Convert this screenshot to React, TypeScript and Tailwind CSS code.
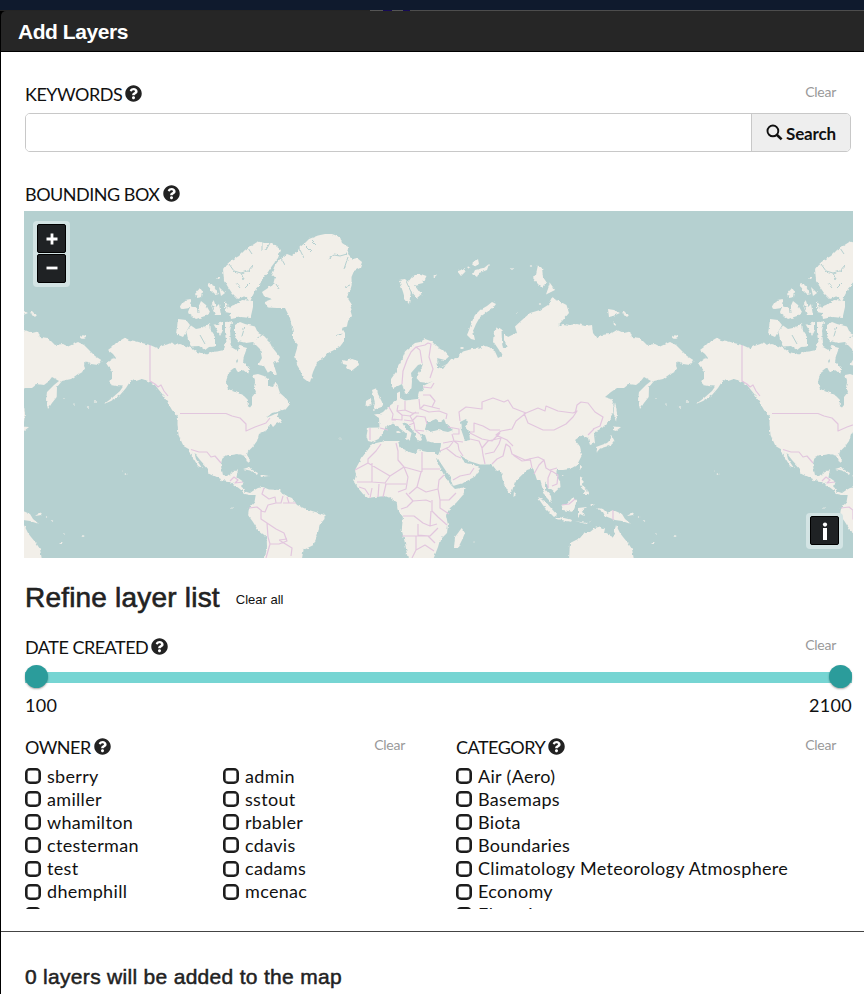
import { FaQuestionCircle } from "react-icons/fa";

// Coastlines of one world copy; the map tiles repeat every 592 units.
const LAND: string[] = [
  // North and Central America, continuing into South America
  "M108,350 L112,347 117,342 121,340 125,337.7 129,340 135,341 142,343 150,345 158,348.5 162,346 167,344.5 172,342.5 175,345 180,344 186,346 192,348.5 197,352 207,354.5 212,352 217,351.5 224,350 226,341 230,341 231,347 238,351 240,356 236,361 238,366 230,372 227,377 226,383 228,389 236,392 244,396 248,400 247.5,406 250,407.5 252,405 252,397 256,392 254,386 255,380 253,375 258,374 264,376 268,379 268,386 273,387 275.7,381.5 278,387 280,393 286.7,399 290,404 286,409 278,411.5 272,413 266,418 273,415 277,413 278,417 283,420.7 276,424 273,427 271,424 267,430 259,434 257,441 253,446.5 248,451.5 247,455 249.7,459 249.7,463 247.5,462 245,456 238,454 232,455 228,455 222.7,457 220.7,465 223,475 230,476 232,471 238,470.5 236.5,477 243.5,481.7 242,487 245,491.5 250,493 253.5,490.5 258,488 263,487 269,489.5 280,490 284,495 292,498 297,505 307,509.5 318,512.7 324.5,515 324.5,519 319.5,525 317.5,535 313.5,545 303.5,550 301.7,560 264.5,560 267,547 266.7,537 258,530 253,522 248,515 249,508 254.5,502 255.7,495 250,495 245,494 240,489 233,484 228,481 222,480 208.5,473.5 207.7,468.5 200,460 194.5,453 196,459 202,468 198,466 192,456 189.5,449.5 183.5,446 178.5,435 177.5,423 178,417 172,410 168,403 163,395 155,385 148,381 142,379 136,381 131,380 126,388 120,395 111,401 104,404 112,398 120,391 123,386.5 117,386 111.7,385 108,381 112,379 112,372 106,363 112,359 116,358 113,354Z",
  // Arctic archipelago
  "M178,319 186,320 190,325 186,332 183,337 176,334 177,327Z",
  "M186.5,331 191,325.5 196,329 201,328 206,326 210,323 211,331 215,337 215,346.5 209,347 205,350 199,346 191,346.5 188,340Z",
  "M180,308 185,300 191,299 190,305 198,308 201,301 206,305 210,312 205,316 196,319 188,313 190,308 183,309Z",
  "M195,294 200,288 203,292 202,297 197,298Z",
  "M208,283 214,286 219,294 215,295 211,291Z",
  "M219,287 225,293 221,296Z",
  "M211,305 214,301 216,307 219,304 221,315 215,315Z",
  "M214,325 223,322 223,330 220,336 217,330Z",
  "M225,322 232,321.5 230,331 231,343 227,344 225,333Z",
  "M225,301 229,307 235,305 242,300 253,301 253,307 250.5,318 241,317 231,319 230,313 225,312Z",
  "M223,269 226,265 232,260 239,256 245,250 251,246 258,241.5 264,243 272,243 281,250 278,258 272,266 268,272 261.7,280 260,285 256.5,288 253,295 250,302 245,296 238,299 232,293 228,287 224,280Z",
  "M235,325 240,322 245,324 255,326.5 258,333 264,336 269,341 272,347 280,357 277,363 273,362 277,375 271,371 268,373 264,366 258,365 262,358 260,349 253,342 246,343 238,341 235,335Z",
  "M240,346 247,348 244,356 243,362 250,369 248,374 242,369 238,373 235,367 238,361 236,352Z",
  // Greenland and Iceland
  "M262,292 268,288 273,285 275,277 271,275 275,265 281,258 287,254 292,256 297,252 300,247 305,243 309,239 318,235.5 325,234 332,234 340,237 342,243 349,247.5 348,254 353,259 357,258 362,262 360,268 354,271 351.5,277 351.7,285 350,291 347,297 352,305 350,309 352,316 348,321 347,326 342,328 345,333 345,340 340,346.5 334,350 328,353 323,359 317,363 313,372 310,382 307,381 303,378 300,370 297,365 295,355 298,345 293,339 293,333 290,318 285,308 277,308 268,307.5 264,302 272,299 264,296Z",
  "M342,360 346,361 352,359 358,361 359,365 352,370.5 346,368 347,365 343,364Z",
  // Svalbard
  "M399,280 405,279 408,282 412,277 418,273 426.5,276 423,283 415,285 421.5,294 417,298 411,291 409,304 405,299 403,292Z",
  // Eurasia
  "M391,379 396,372 398,367 402,359 405,351.5 410,347 415,343 420,342 425,339 432,341.5 436,346 443,350 449,356.5 445,360 437,358 441,367 447,364 451,359 457,358 463,351.5 472,349 480,348.5 482,345 489,347 495,351.5 498,358 502,356 499,350 493,341 494,332 497,327 501.5,330 502,342 503,348 507,347 504,340 504,333 508,337 512,335 517,333 515,326.5 522,320 530,313 540,310 548,305 551.5,298 559,301 566.5,305 569,313 563,320 557,326.5 563,324 570,325 577,324 585,326 592,325 593,333 597,338.5 601,335 610,334 617,330 624,333 630,331.5 632,337 640,338 647,345 655,344 660,346.5 670,342 676,345 680,349 687,356 694,360.5 690,365 683,364 678,361 676,365 677,370 670,374 663,379 654,381 649,387 648.7,397 644,403 640,409 638,400 639,392 646,385 651,381 644,377 640,382 636,385 629,384 624,388 617,388 611,392 605,397 611.5,399 613.5,403 613,413 607,423 602,428 595,432 594,435 595,443 590,445 588,438 582,435 575,440 580,446.5 582,455 577,465 570,469 563,470 557,470 556,475 560,481.5 560.5,487 555,492 548.5,487 545,481.5 545,489 551,496 551.7,503 546,497 543,490 540,480 537,480 533,468 527,470 515,481.7 512,491 509,493.5 503,481.7 500.5,470 497,471 492,464.5 480,464.5 469,461 460,455 463,460 467,463.5 473,464 480,468.5 475,476.5 463,483 453,486 450,477 440,462 437,457 440,451 441,443 434,443 427,441 425,435 420,434 422,440 418,442 414.7,433 407,423.5 402,422 405,428 411.5,433 410,439 406,440 407,434 398,427 393,423.5 385,428.5 383,432 378.5,439 372,442 368,441 366.5,436 368,427.7 379.5,427.5 379,418 374,414.5 379,414 383,412 388,407 392,404 397,400 397,393 400,391.5 400,398 405,400.5 417,399 419,391.5 424,391 423,386 433,381 428,383 420,382 416.5,378 421.5,368 423,363.5 418,365 411,373 412,381 411.5,388 408,394 405,393 402,384 398,386 393,388 391,384Z",
  "M372,390 377,388 378,394 382,402 383,406.5 373,410 375,403Z",
  "M366,401 371,398 371.5,405 365.5,407Z",
  // Africa and Madagascar
  "M372,444 385,441 398,441 400,448 407,451 415,454 418,450 427,452 435,452 437,455 438,463 445,477 452,486 455,489 466,487 463,495 456,503 450,508 446,515 448,525 447,533 440,540 438,547 433,560 408,560 405,543 401.7,530 403,517 397.7,510 396.7,502 390,498 385,496 376,497 368,498 363,494 358,488 354,482 356,475 355,470 361.5,458 367,451Z",
  "M461.7,528 465,533 462,540 458,548 454,548 455,537Z",
  // Novaya Zemlya, Severnaya Zemlya and the New Siberian Islands
  "M467,335 469,330 472,321.5 475,315 480,310 487,306 492,302 496,304 493,308 487,312 480,317 476,324 473,331 475,340 471,339Z",
  "M538,265 542,268 543,277 547,283 542,288 537,283 533,278 536,274Z",
  "M550,283 555,290 546,294.5Z",
  "M608,309 614,310 620,313 613,316 609,317Z",
  "M622,313 629,315 627,317Z M613,321 617,326 614,325Z",
  "M457,271 463,269 466,271 461,276Z M467,267 471,266 469,269Z M472,264 478,259 479,264 474,267Z M475,270 484,268 489,264 487,270 479,273 477,277 473,274Z",
  // Japan, Sakhalin, Taiwan and the Philippines
  "M615,401.5 617,413 616,422 613.5,413Z",
  "M613,426.5 621,427 616,431 613,430Z",
  "M611.5,435 614.5,441 611.5,445 600,448.5 597,452 596,447 607,443 610,440Z",
  "M580,465 582,466 580,470Z M562,473 564,475 562,476Z",
  "M580,476.5 583,478 582,485 587,489 588.5,495 583,495 585,491 580,485Z",
  // Indonesia and New Guinea
  "M561.5,505 567,504 573,497 576.5,501 575,507 573,512 563,510Z",
  "M538,498 545,501 551,508 557,515 554,517 545,508Z",
  "M556.5,517 564,518 572,520 571,522 557,519Z M575,521 586,523 592,521 586,524Z",
  "M578,508 587,507 582,511 584,516 580,514 578,517Z",
  "M597,508 603,509 607,513 613,510 622,514 625,519 631,524 622,521 615,520 605,516 603,512Z",
  "M627,516 633,515 634,512 630,514Z",
  "M514,491.5 516,495 513.5,497Z",
  // Australia
  "M569,560 570,543 580,538 585,532 590,532 595,528 600,526.5 605,528.5 604,533 613,537 616,525 620,533 623,537 628,543 632,549 634,560Z",
  // Caribbean
  "M243,469 248,467.5 258,473 257,475 250,470.5Z M260,474.5 269,476 261,477Z",
];

// Faint island chains and isolated specks
const SPECKS: [number, number, number][] = [
  [83, 337, 2.5], [95, 402, 1], [88, 407, 1], [74, 404, 0.8], [64, 398, 0.8],
  [126, 474, 1.2], [122, 471, 0.7], [61, 543, 1.4], [83, 536, 1.2], [65, 534, 0.8],
  [53, 521, 1], [47, 517, 1], [32, 312, 1.5], [34, 315, 1.5], [512, 269, 1],
  [531, 266, 1], [540, 304, 1], [517, 313, 0.8], [462, 348, 1.5], [357, 480, 0.8],
  [232, 508, 0.8], [340, 439, 0.7], [474, 542, 0.7], [592, 505, 1.3], [398, 432, 1.5],
  [218, 278, 1.5], [435, 276, 1.3],
];

const LAKES: string[] = [
  "M427,421 L431,421 436,419 440,422 444,419 446,424 453,430 448,432 438,430 430,432 425,430Z",
  "M460,422 L466,419 468,422 465,427 469,432 470,440 465,441 463,435 461,429Z",
  "M228,373 L236,371 243,374 250,377 255,382 253,391 248,394 240,393 232,391 227,386Z",
  "M437,358 L439,363 442,367 446,365 443,369 438,367Z",
];

const FJORDS =
  "M229,264 L234,271 241,273 248,271 253,265 M241,273 L244,280 M236,283 L240,288 M245,288 L250,283 M262,242 L262,250 M270,243 L266,250 M248,248 L252,254 M276,284 L279,289 M281,258 L285,265 M299,248 L304,258 M304,245 L311,252 M311,240 L317,246 M328,259 L334,255 340,256 347,254 M344,269 L348,257 M350,285 L345,287 M342,333 L337,336 M406,281 L412,294 M198,303 L199,313 M200,335 L205,344 M245,326 L242,336 M262,335 L256,339 M211,303 L214,310 M229,303 L226,309";

const BORDERS =
  "M150,345 L150,381 155,384 158,387 161,385 164,391 168,396 M180,413.5 L226,413.5 232,416 240,418 246,424 246,431 255,427 266,423 270,418 M191,449.5 L199,452 207,452 211,457 215,456 221,463 M230,481 L234,477 238,480 235,483 243,482 M264,488 L262,494 269,499 275,497 276,503 268,505 265,512 261,511 261,519 267,523 268,537 270,544 266,558 M249,508 L257,507 262,511 M283,496 L281,503 276,503 M283,503 L296,503 M287,497 L289,503 M267,523 L276,529 284,533 287,541 279,544 270,544 M279,540 L292,548 291,556 M279,540 L287,539 M402,384 L403,371 407,360 411,352 416,347 420,350 M420,350 L422,363 M416,347 L425,345 428,343 431,344 429,357 433,369 430,378 M370,428 L370,440 M380,428 L388,430 M389,407 L393,414 392,420 396,420 M392,419 L402,420 402,415 397,411 398,405 M405,401 L405,410 412,413 419,413 M397,411 L405,410 M402,415 L410,416 416,412 M404,420 L412,421 417,416 425,417 427,424 M410,416 L414,423 415,430 424,431 M414,423 L409,425 M415,430 L420,434 M419,399 L420,409 424,405 432,407 435,401 430,395 423,395 M421,409 L429,412 439,411 447,414 446,419 M423,387 L431,388 434,383 M432,407 L440,409 M448,427 L459,429 459,434 453,434 M443,443 L454,441 452,434 M454,441 L458,444 459,450 463,456 M440,451 L449,447 453,442 M446,448 L456,456 461,458 M453,480 L460,476 470,474 474,468 M455,441 L463,442 M470,439 L479,441 482,448 483,455 485,464 M460,421 L459,412 466,407 482,409 482,402 493,398 504,402 508,400 513,408 526,413 538,408 545,411 546,406 558,411 573,413 577,411 573,417 566,424 554,430 543,430 528,423 524,413 M526,413 L516,421 512,429 501,431 496,435 507,440 513,446 M470,432 L474,432 474,423 483,426 490,430 500,430 M470,433 L482,439 492,441 500,433 M482,448 L488,441 501,438 499,444 494,452 485,454 M492,464 L497,459 503,456 506,444 510,447 512,454 525,460 538,457 544,460 539,465 534,474 M513,455 L522,461 530,460 M530,458 L532,468 M544,460 L546,468 551,471 548,478 548,488 M550,470 L558,475 557,484 552,486 M550,470 L557,468 M575,414 L577,405 581,402 588,403 595,412 603,417 600,426 593,429 M588,435 L594,429 M562,505 L569,504 575,499 M613,510 L613,520 M355,470 L368,463 368,459 376,451 381,444 M368,463 L390,476 404,467 398,460 398,451 396,443 M404,467 L422,472 M422,452 L422,472 M422,469 L440,469 M404,467 L408,477 406,489 398,492 M372,463 L372,482 357,482 M372,482 L385,483 390,476 M385,484 L406,484 M386,484 L383,497 M379,484 L378,497 M372,488 L370,498 M359,487 L365,489 369,495 M421,472 L417,487 409,494 M417,487 L426,492 438,489 439,480 444,475 M406,493 L413,501 407,507 401,509 M413,501 L426,500 431,502 M438,489 L440,500 449,500 456,493 M440,500 L440,508 449,514 M432,500 L432,511 438,517 447,525 M403,516 L414,516 423,523 430,526 437,524 M418,524 L418,535 430,536 438,528 M402,536 L428,536 435,543 M416,536 L416,550 412,558 M416,550 L425,545 434,551 M431,511 L430,526";

function HelpLabel({ children }: { children: string }) {
  return (
    <h3 className="flex h-6 items-center gap-[3px] text-[18px] leading-6 tracking-[-0.5px]">
      <span>{children}</span>
      <FaQuestionCircle className="mb-[2px] size-[17px] text-[#222]" />
    </h3>
  );
}

function Clear() {
  return <button className="mr-4 h-5 text-[14px] leading-5 tracking-[-0.25px] text-[#999]">Clear</button>;
}

function World() {
  return (
    <g id="world">
      <g filter="url(#coast)">
        <g fill="#f2efe9">
          {LAND.map((d) => (
            <path key={d} d={d} />
          ))}
          {SPECKS.map(([x, y, r]) => (
            <ellipse key={`${x}-${y}`} cx={x} cy={y} rx={r * 1.2} ry={r * 0.7} />
          ))}
        </g>
        <g fill="#b5d0d0">
          {LAKES.map((d) => (
            <path key={d} d={d} />
          ))}
        </g>
        <path d={FJORDS} fill="none" stroke="#b5d0d0" strokeWidth="1" />
      </g>
      <path d={BORDERS} fill="none" stroke="#e2c6de" strokeWidth="1.2" strokeLinejoin="round" />
    </g>
  );
}

function BoundingMap() {
  return (
    <div className="relative -ml-px h-[347px] w-[829px] overflow-hidden bg-[#b5d0d0]">
      <svg viewBox="24 211 829 347" className="block h-[347px] w-[829px]">
        <defs>
          <filter id="coast" x="-5%" y="-5%" width="110%" height="110%">
            <feTurbulence type="fractalNoise" baseFrequency="0.25" numOctaves="2" seed="4" />
            <feDisplacementMap in="SourceGraphic" scale="3" xChannelSelector="R" yChannelSelector="G" />
          </filter>
        </defs>
        <World />
        <use href="#world" x="592" />
        <use href="#world" x="-592" />
      </svg>
      <div className="absolute left-[9px] top-[10px] flex flex-col gap-px rounded bg-[#d3e4e4] p-[4px] pt-[3px]">
        {[true, false].map((plus) => (
          <button
            key={String(plus)}
            className="flex h-[29px] w-[29px] items-center justify-center rounded-[2px] border border-black bg-[#1f2224]"
          >
            <svg viewBox="0 0 12 12" className="mt-px size-3" stroke="white" strokeWidth="2.8">
              <path d={plus ? "M0.5 6H11.5M6 0.5V11.5" : "M0.5 5H11.5"} />
            </svg>
          </button>
        ))}
      </div>
      <div className="absolute bottom-[9px] right-[10px] rounded bg-[#d3e4e4] p-[3px] pb-[4px] pl-[4px]">
        <button className="mr-px flex size-[29px] items-center justify-center rounded-[2px] border border-black bg-[#1f2224]">
          <svg viewBox="0 0 6 18" className="h-[18px] w-[6px]" fill="white">
            <circle cx="3" cy="2.6" r="2.1" />
            <rect x="1" y="6" width="4" height="12" />
          </svg>
        </button>
      </div>
    </div>
  );
}

function CheckList({ items, className }: { items: string[]; className: string }) {
  return (
    <ul className={className}>
      {items.map((item, i) => (
        <li
          key={i}
          className="flex h-[23.1px] items-center gap-[6px] whitespace-nowrap text-[18px] leading-[23px] tracking-[0.32px]"
        >
          <span className="size-4 shrink-0 rounded-[5px] border-2 border-[#1c1c1c] bg-white shadow-[inset_0_0_0_0.6px_#1c1c1c]" />
          <span>{item}</span>
        </li>
      ))}
    </ul>
  );
}

export default function App() {
  return (
    <div className="h-[994px] w-[864px] overflow-hidden bg-white font-['Lato',sans-serif] text-[#111]">
      <div className="h-[10px] bg-[#0f1a2d]" />
      <div className="flex h-[984px] flex-col bg-black">
        <div className="flex h-px shrink-0 bg-[#242424]">
          <span className="ml-[370px] w-[13px] bg-[#555]" />
          <span className="w-[9px] bg-[#160b55]" />
          <span className="w-[11px] bg-[#555]" />
          <span className="w-[7px] bg-[#160b55]" />
          <span className="flex-1 bg-[#4d4d4d]" />
        </div>
        <header className="ml-px flex h-[41px] shrink-0 items-center rounded-tl-[5px] border-b border-black bg-[#262626] pl-[17px] pt-px font-['Liberation_Sans',sans-serif] text-[21px] font-bold tracking-[-0.45px] text-white">
          Add Layers
        </header>
        <main className="ml-px flex-1 bg-white">
          <div className="h-[880px] border-b border-[#444] pl-[24px] pt-[30px]">
            <div className="w-[827px]">
              <div className="flex h-[31px] items-start justify-between">
                <HelpLabel>KEYWORDS</HelpLabel>
                <Clear />
              </div>
              <div className="flex h-[39px] w-[826px] overflow-hidden rounded-[5px] border border-[#c8c8c8]">
                <input className="flex-1 bg-white outline-none" />
                <button className="flex w-[99px] items-center justify-center gap-[3px] border-l border-[#c8c8c8] bg-[#eee] pt-[2px] text-[17px] font-bold tracking-[-0.15px]">
                  <svg viewBox="0 0 17 17" className="mb-[3px] size-[17px]" fill="none" stroke="#111">
                    <circle cx="6.9" cy="6.9" r="5.4" strokeWidth="1.9" />
                    <path d="M10.8 10.8L15.6 15.4" strokeWidth="2.6" />
                  </svg>
                  Search
                </button>
              </div>
              <div className="h-[59px] pt-[30px]">
                <HelpLabel>BOUNDING BOX</HelpLabel>
              </div>
              <BoundingMap />
              <div className="flex h-[77px] items-baseline gap-4 pt-[21px] font-['Liberation_Sans',sans-serif]">
                <h2 className="text-[28px] leading-[38px] tracking-[0.2px] text-[#222] [-webkit-text-stroke:0.6px_#222]">
                  Refine layer list
                </h2>
                <button className="-translate-y-[3px] text-[13px]">Clear all</button>
              </div>
              <div className="flex h-[37px] items-start justify-between">
                <HelpLabel>DATE CREATED</HelpLabel>
                <Clear />
              </div>
              <div className="relative h-[11px] bg-[#76d5d3]">
                <span className="absolute -top-[7px] left-0 size-[23px] rounded-full bg-[#2b9c9b] shadow-[0_1px_2px_rgba(0,0,0,0.35)]" />
                <span className="absolute -top-[7px] right-0 size-[23px] rounded-full bg-[#2b9c9b] shadow-[0_1px_2px_rgba(0,0,0,0.35)]" />
              </div>
              <div className="flex h-[52px] justify-between pt-[10px] text-[18px] leading-6 tracking-[0.3px]">
                <span>100</span>
                <span>2100</span>
              </div>
            </div>
            <div className="flex">
              <section className="w-[431px]">
                <div className="flex h-[29.6px] items-start justify-between pr-[35px]">
                  <HelpLabel>OWNER</HelpLabel>
                  <Clear />
                </div>
                <div className="flex h-[144.4px] overflow-hidden">
                  <CheckList className="w-[198px]" items={["sberry", "amiller", "whamilton", "ctesterman", "test", "dhemphill", ""]} />
                  <CheckList className="" items={["admin", "sstout", "rbabler", "cdavis", "cadams", "mcenac"]} />
                </div>
              </section>
              <section className="w-[396px]">
                <div className="flex h-[29.6px] items-start justify-between">
                  <HelpLabel>CATEGORY</HelpLabel>
                  <Clear />
                </div>
                <div className="h-[144.4px] overflow-hidden">
                  <CheckList
                    className=""
                    items={["Air (Aero)", "Basemaps", "Biota", "Boundaries", "Climatology Meteorology Atmosphere", "Economy", "Elevation"]}
                  />
                </div>
              </section>
            </div>
          </div>
          <footer className="pl-[24px] pt-[32px] font-['Liberation_Sans',sans-serif] text-[21px] leading-[26px] tracking-[0.3px] text-[#222] [-webkit-text-stroke:0.5px_#222]">
            0 layers will be added to the map
          </footer>
        </main>
      </div>
    </div>
  );
}
